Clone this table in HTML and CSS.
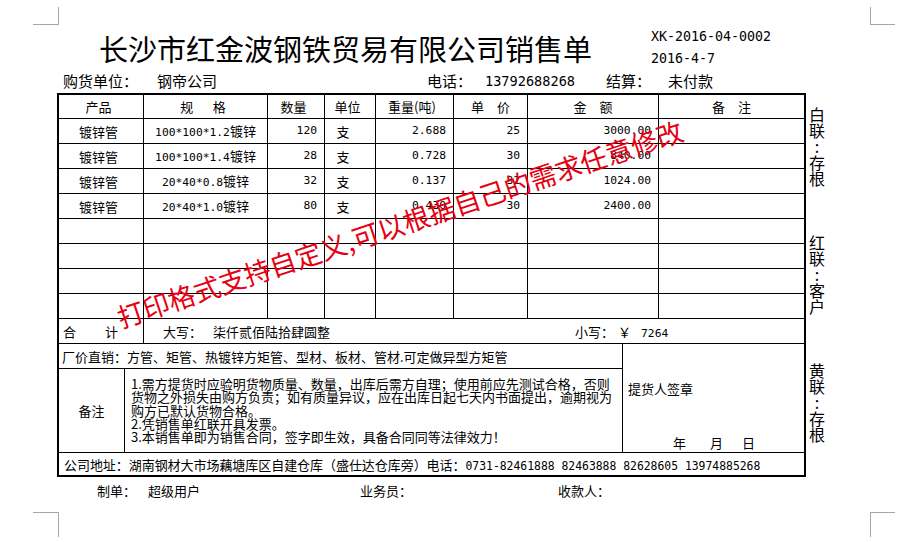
FILE: index.html
```html
<!DOCTYPE html>
<html lang="zh-CN">
<head>
<meta charset="utf-8">
<title>销售单</title>
<link rel="stylesheet" href="styles.css">
</head>
<body>
<div class="page">
  <span class="crop v tl"></span><span class="crop h tlh"></span>
  <span class="crop v tr"></span><span class="crop h trh"></span>
  <span class="crop v bl"></span><span class="crop h blh"></span>
  <span class="crop v br"></span><span class="crop h brh"></span>

  <div class="sheet">
    <div class="title-row">
      <h1 class="title">长沙市红金波钢铁贸易有限公司销售单</h1>
      <div class="code"><div>XK-2016-04-0002</div><div>2016-4-7</div></div>
    </div>

    <div class="info-row">
      <span class="i-l1">购货单位：</span><span class="i-v1">钢帝公司</span>
      <span class="i-l2">电话：</span><span class="i-v2">13792688268</span>
      <span class="i-l3">结算：</span><span class="i-v3">未付款</span>
    </div>

    <div class="form-wrap">
      <div class="form">
        <div class="items">
          <div class="th sl">产品</div>
          <div class="th sl">规&emsp;&ensp;格</div>
          <div class="th sl">数量</div>
          <div class="th sl">单位</div>
          <div class="th sl">重量(吨)</div>
          <div class="th">单　价</div>
          <div class="th">金　额</div>
          <div class="th">备　注</div>

          <div class="sl">镀锌管</div><div><span><span class="n">100*100*1.2</span>镀锌</span></div><div class="r"><span class="n">120</span></div><div class="u">支</div><div class="r"><span class="n">2.688</span></div><div class="r"><span class="n">25</span></div><div class="r"><span class="n">3000.00</span></div><div></div>
          <div class="sl">镀锌管</div><div><span><span class="n">100*100*1.4</span>镀锌</span></div><div class="r"><span class="n">28</span></div><div class="u">支</div><div class="r"><span class="n">0.728</span></div><div class="r"><span class="n">30</span></div><div class="r"><span class="n">840.00</span></div><div></div>
          <div class="sl">镀锌管</div><div><span><span class="n">20*40*0.8</span>镀锌</span></div><div class="r"><span class="n">32</span></div><div class="u">支</div><div class="r"><span class="n">0.137</span></div><div class="r"><span class="n">32</span></div><div class="r"><span class="n">1024.00</span></div><div></div>
          <div class="sl">镀锌管</div><div><span><span class="n">20*40*1.0</span>镀锌</span></div><div class="r"><span class="n">80</span></div><div class="u">支</div><div class="r"><span class="n">0.430</span></div><div class="r"><span class="n">30</span></div><div class="r"><span class="n">2400.00</span></div><div></div>

          <div></div><div></div><div></div><div></div><div></div><div></div><div></div><div></div>
          <div></div><div></div><div></div><div></div><div></div><div></div><div></div><div></div>
          <div></div><div></div><div></div><div></div><div></div><div></div><div></div><div></div>
          <div></div><div></div><div></div><div></div><div></div><div></div><div></div><div></div>
        </div>

        <div class="total">
          <div class="total-label"><span class="he">合</span><span>计</span></div>
          <div class="total-body">
            <span class="t-l">大写：</span><span class="t-v">柒仟贰佰陆拾肆圆整</span>
            <span class="t-small">小写：<span class="yen">￥</span><span class="n">7264</span></span>
          </div>
        </div>

        <div class="lower">
          <div class="factory">厂价直销：方管、矩管、热镀锌方矩管、型材、板材、管材.可定做异型方矩管</div>
          <div class="pickup">
            <div class="pickup-title">提货人签章</div>
            <div class="pickup-date"><span>年</span><span>月</span><span>日</span></div>
          </div>
          <div class="note-label">备注</div>
          <div class="note-body">1.需方提货时应验明货物质量、数量，出库后需方自理；使用前应先测试合格，否则<br>货物之外损失由购方负责；如有质量异议，应在出库日起七天内书面提出，逾期视为<br>购方已默认货物合格。<br>2.凭销售单红联开具发票。<br>3.本销售单即为销售合同，签字即生效，具备合同同等法律效力！</div>
        </div>

        <div class="footer"><span>公司地址：湖南钢材大市场藕塘库区自建仓库（盛仕达仓库旁）电话：<span class="n f">0731-82461888 82463888 82628605 13974885268</span></span></div>
      </div>

      <div class="side">
        <div class="side-label">白联:存根</div>
        <div class="side-label">红联:客户</div>
        <div class="side-label">黄联:存根</div>
      </div>
    </div>

    <div class="sign-row">
      <span class="s1">制单：</span><span class="s2">超级用户</span><span class="s3">业务员：</span><span class="s4">收款人：</span>
    </div>
  </div>

  <div class="watermark">打印格式支持自定义,可以根据自己的需求任意修改</div>
</div>
</body>
</html>
```

FILE: styles.css
```css
* { box-sizing: border-box; }

body {
  margin: 0;
  background: #fff;
  color: #000;
  font-family: "Noto Sans CJK SC", sans-serif;
}

.page {
  position: relative;
  width: 900px;
  height: 542px;
  overflow: hidden;
}

/* crop marks */
.crop { position: absolute; background: #a6a6a6; }
.crop.v { width: 1px; }
.crop.h { height: 1px; width: 25px; }
.tl { left: 58px; top: 7px; height: 18px; }
.tlh { left: 33px; top: 24px; }
.tr { left: 870px; top: 7px; height: 18px; }
.trh { left: 870px; top: 24px; }
.bl { left: 58px; top: 512px; height: 25px; }
.blh { left: 33px; top: 512px; }
.br { left: 870px; top: 512px; height: 25px; }
.brh { left: 870px; top: 512px; }

.sheet {
  padding: 28px 0 0 57px;
}

/* title */
.title-row {
  display: flex;
  height: 40px;
}
.title {
  margin: 0 0 0 42px;
  font-size: 29px;
  font-weight: 400;
  line-height: 40px;
  white-space: nowrap;
}
.code {
  margin: -2px 0 0 59px;
  font-family: "DejaVu Sans Mono", monospace;
  font-size: 13.3px;
  line-height: 21.5px;
  white-space: nowrap;
}

/* info row */
.info-row {
  display: flex;
  height: 25px;
  align-items: center;
  font-size: 15px;
  white-space: nowrap;
}
.i-l1 { margin-left: 6px; width: 94px; }
.i-v1 { width: 270px; }
.i-l2 { width: 58px; }
.i-v2 { width: 121px; font-family: "DejaVu Sans Mono", monospace; font-size: 13.6px; }
.i-l3 { width: 62px; }

/* form */
.form-wrap { display: flex; }

.form {
  width: 749px;
  border: 2px solid #000;
  background: #000;
  display: flex;
  flex-direction: column;
  gap: 1px;
}

.n { font-family: "DejaVu Sans Mono", monospace; font-size: 11.3px; }

.items {
  display: grid;
  grid-template-columns: 84px 123px 56px 50px 77px 73px 130px 145px;
  grid-template-rows: 23px;
  grid-auto-rows: 24px;
  gap: 1px;
}
.items > div {
  background: #fff;
  display: flex;
  align-items: center;
  justify-content: center;
  font-size: 13px;
  line-height: 1;
  white-space: nowrap;
}
.items > .sl { padding-right: 5px; }
.items > .r { justify-content: flex-end; padding-right: 7px; }
.items > .u { padding-right: 14px; }

.total {
  display: grid;
  grid-template-columns: 84px 660px;
  gap: 1px;
  height: 24px;
}
.total > div {
  background: #fff;
  display: flex;
  align-items: center;
  font-size: 13px;
  white-space: nowrap;
}
.total-label { padding-left: 4px; }
.he { margin-right: 29px; }
.total-body { padding-left: 19px; }
.t-l { width: 50px; }
.t-v { width: 362px; }
.yen { margin: 0 10px 0 4px; }

.lower {
  display: grid;
  grid-template-columns: 65px 497px 181px;
  grid-template-rows: 24px 83px;
  gap: 1px;
}
.lower > div { background: #fff; font-size: 13px; white-space: nowrap; }
.factory {
  grid-column: 1 / 3;
  display: flex;
  align-items: center;
  padding-left: 3px;
}
.pickup {
  grid-column: 3;
  grid-row: 1 / 3;
  display: flex;
  flex-direction: column;
  padding: 37px 0 0 5px;
}
.pickup-title { line-height: 16px; }
.pickup-date {
  margin-top: 38px;
  padding-left: 45px;
  display: flex;
  gap: 24px;
  line-height: 16px;
}
.pickup-date span:last-child { margin-left: -5px; }
.note-label {
  display: flex;
  align-items: center;
  justify-content: center;
}
.note-body {
  padding: 8px 0 0 6px;
  line-height: 13.3px;
}

.footer {
  height: 22px;
  background: #fff;
  display: flex;
  align-items: center;
  padding-left: 5px;
  font-size: 13px;
  letter-spacing: -0.05px;
  white-space: nowrap;
}
.footer .f { font-size: 11.4px; letter-spacing: 0; }

/* side copies */
.side {
  display: flex;
  flex-direction: column;
  gap: 48px;
  padding: 13px 0 0 3px;
}
.side-label {
  width: 16px;
  font-size: 16px;
  line-height: 16px;
  text-align: center;
  line-break: anywhere;
  word-break: break-all;
}

/* sign row */
.sign-row {
  display: flex;
  height: 26px;
  align-items: center;
  font-size: 13px;
  white-space: nowrap;
}
.s1 { margin-left: 40px; width: 51px; }
.s2 { width: 212px; }
.s3 { width: 198px; }

/* watermark */
.watermark {
  position: absolute;
  left: 118px;
  top: 305px;
  font-size: 26.7px;
  line-height: 26px;
  color: #e60012;
  white-space: nowrap;
  transform: rotate(-18.5deg);
  transform-origin: 0 50%;
}
```
